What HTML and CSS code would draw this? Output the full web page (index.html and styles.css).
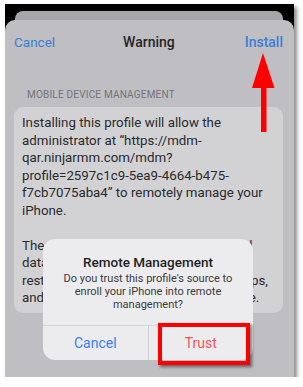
FILE: index.html
```html
<!DOCTYPE html>
<html lang="en">
<head>
<meta charset="UTF-8">
<meta name="viewport" content="width=device-width, initial-scale=1.0">
<title>Warning - Install Profile</title>
<link rel="stylesheet" href="styles.css">
</head>
<body>

<div class="frame">
  <div class="back-card"></div>
  <div class="sheet">
    <div class="nav">
      <span class="nav-btn">Cancel</span>
      <span class="nav-title">Warning</span>
      <span class="nav-btn strong">Install</span>
    </div>
    <div class="section-label">MOBILE DEVICE MANAGEMENT</div>
    <div class="card">
      <p>Installing this profile will allow the<br>administrator at “https://mdm-<br>qar.ninjarmm.com/mdm?<br>profile=2597c1c9-5ea9-4664-b475-<br>f7cb7075aba4” to remotely manage your<br>iPhone.</p>
      <p>The administrator may collect personal<br>data, add/remove accounts and<br>restrictions, list, install, and manage apps,<br>and remotely erase data on your iPhone.</p>
    </div>
  </div>

  <!-- alert on top of the sheet -->
  <div class="alert">
    <div class="alert-body">
      <div class="alert-title">Remote Management</div>
      <div class="alert-msg">Do you trust this profile's source to<br>enroll your iPhone into remote<br>management?</div>
    </div>
    <div class="alert-actions">
      <span class="alert-btn">Cancel</span>
      <span class="alert-btn danger">Trust</span>
    </div>
  </div>

  <!-- annotations -->
  <div class="highlight"></div>
  <svg class="arrow" width="30" height="84" viewBox="0 0 30 84">
    <polygon points="11,0 22.5,35 14.5,35 14.5,79 9,79 9,35 0,35" fill="#ff0000"/>
  </svg>
</div>

</body>
</html>
```

FILE: styles.css
```css
body {
  margin: 0;
  background: #fff;
  font-family: Roboto, "Liberation Sans", sans-serif;
}

.frame {
  position: relative;
  width: 289px;
  height: 373px;
  margin: 4px 0 0 5px;
  background: #000;
  box-shadow: 3px 3px 4px rgba(0, 0, 0, 0.45);
  display: flex;
  flex-direction: column;
  overflow: hidden;
}

.back-card {
  height: 9px;
  margin: 7px 11px 0 10px;
  background: #a7a7ab;
  border-radius: 8px 8px 0 0;
}

.sheet {
  flex: 1;
  background: #bfbec3;
  border-radius: 10px 10px 0 0;
}

.nav {
  height: 43px;
  padding: 0 11px 0 9px;
  display: flex;
  align-items: center;
  justify-content: space-between;
}

.nav-btn {
  font-size: 13.5px;
  color: #3a7ed6;
}

.nav-btn.strong {
  font-weight: 500;
  font-size: 14px;
}

.nav-title {
  font-size: 14px;
  font-weight: 500;
  color: #262628;
  margin-right: 2px;
}

.section-label {
  margin: 26px 0 0 22px;
  font-size: 10px;
  line-height: 12px;
  color: #747378;
  letter-spacing: 0.2px;
}

.card {
  margin: 6px 11px 0 9px;
  padding: 7px 6px 6px 8px;
  background: #d2d2d5;
  border-radius: 9px;
  font-size: 13.3px;
  line-height: 17.5px;
  color: #2a2a2c;
}

.card p {
  margin: 0;
  white-space: nowrap;
}

.card p + p {
  margin-top: 17.5px;
}

.alert {
  position: absolute;
  left: 38px;
  top: 235px;
  width: 210px;
  height: 121px;
  background: #ececee;
  border-radius: 12px;
  display: flex;
  flex-direction: column;
}

.alert-body {
  height: 87px;
  padding-top: 15px;
  box-sizing: border-box;
  text-align: center;
  border-bottom: 1px solid #d3d3d6;
}

.alert-title {
  font-size: 13.5px;
  font-weight: 500;
  color: #1f1f21;
  line-height: 16px;
}

.alert-msg {
  margin-top: 2px;
  font-size: 11px;
  line-height: 13px;
  color: #3a3a3c;
}

.alert-actions {
  flex: 1;
  display: flex;
}

.alert-btn {
  flex: 1;
  display: flex;
  align-items: center;
  justify-content: center;
  font-size: 14px;
  color: #3a7ef0;
}

.alert-btn + .alert-btn {
  border-left: 1px solid #d3d3d6;
}

.alert-btn.danger {
  color: #f05558;
}

.highlight {
  position: absolute;
  left: 153px;
  top: 319px;
  width: 84px;
  height: 34px;
  border: 4px solid #ff0000;
  box-shadow: 2px 2px 3px rgba(0, 0, 0, 0.5);
}

.arrow {
  position: absolute;
  left: 247px;
  top: 49px;
}
```
